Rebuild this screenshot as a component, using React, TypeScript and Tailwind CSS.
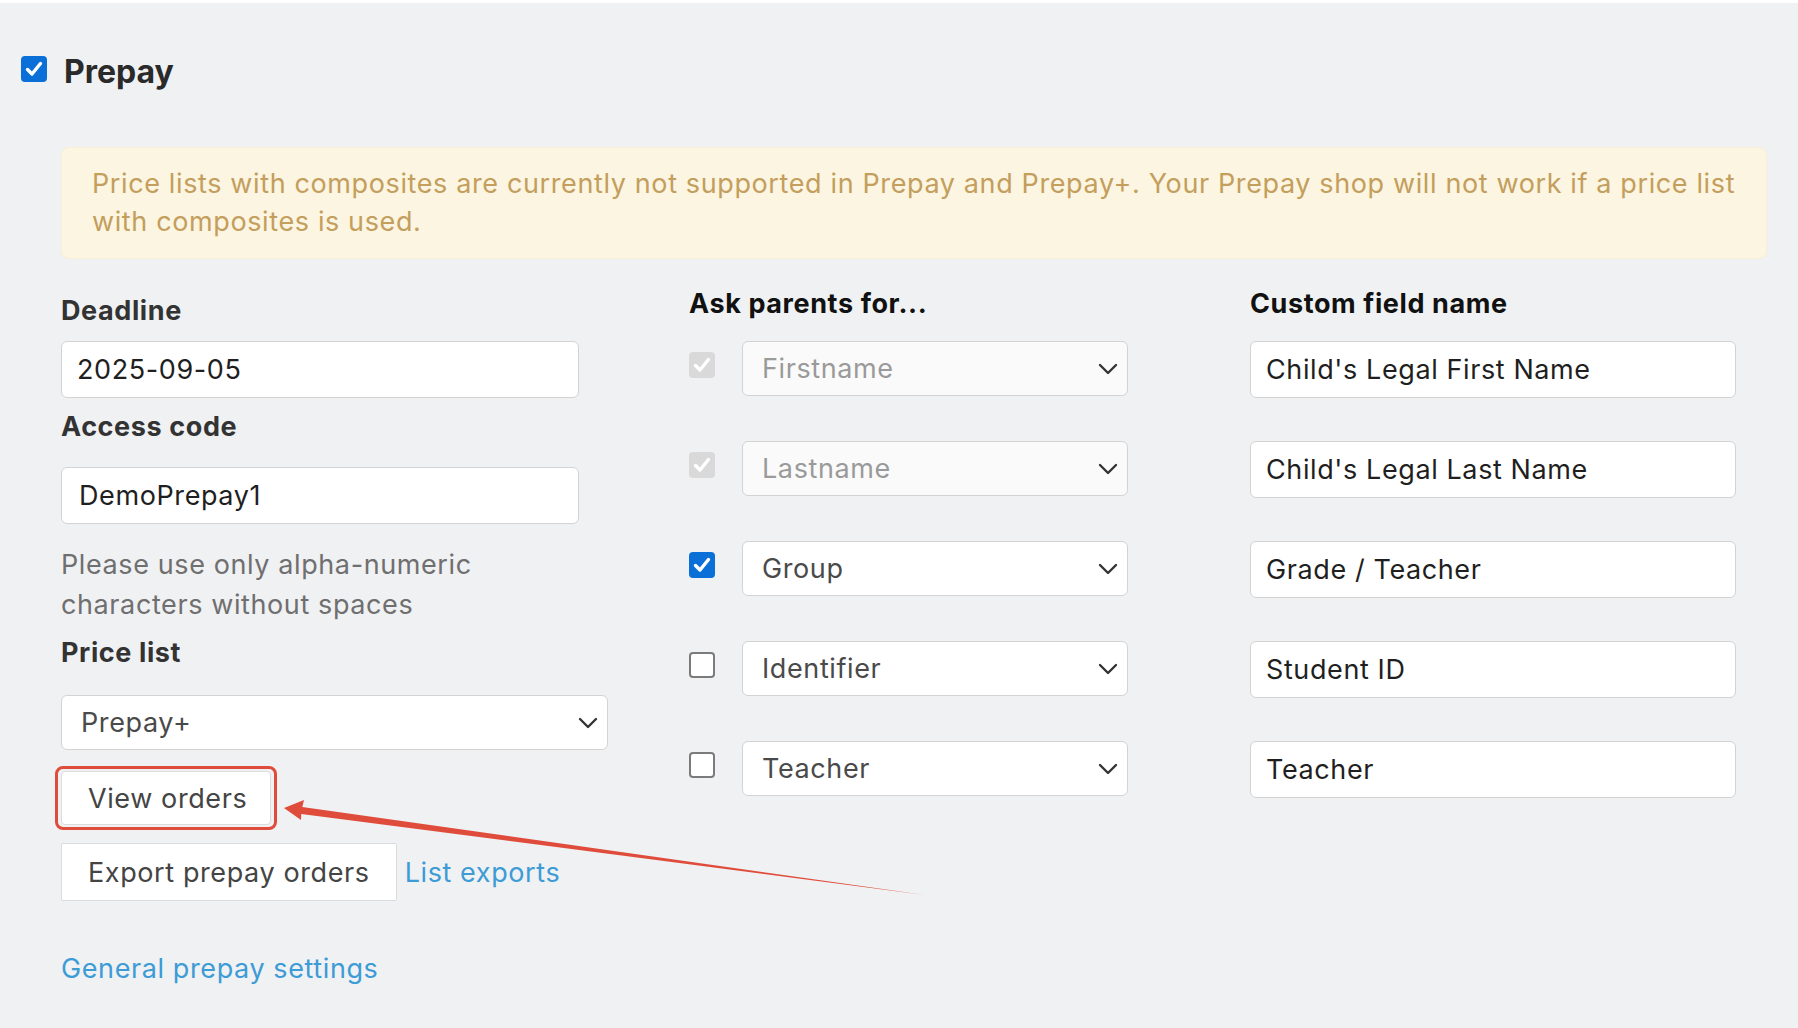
import React from "react";

type CbState = "checked" | "unchecked" | "disabled";

function Check() {
  return (
    <svg viewBox="0 0 26 26" className="w-full h-full">
      <path d="M6.5 13.5 L11 18 L19.5 7.5" fill="none" stroke="white" strokeWidth="3.4" strokeLinecap="round" strokeLinejoin="round" />
    </svg>
  );
}

function Checkbox({ state }: { state: CbState }) {
  if (state === "checked")
    return (
      <div className="w-[26px] h-[26px] rounded-[4px] bg-[#0b6fd8] shrink-0">
        <Check />
      </div>
    );
  if (state === "disabled")
    return (
      <div className="w-[26px] h-[26px] rounded-[4px] bg-[#d9d9d9] shrink-0">
        <Check />
      </div>
    );
  return <div className="w-[26px] h-[26px] rounded-[4px] border-2 border-[#7b7b7b] bg-white shrink-0" />;
}

function Chevron() {
  return (
    <svg viewBox="0 0 20 12" className="w-[20px] h-[12px] shrink-0">
      <path d="M2 2 L10 10 L18 2" fill="none" stroke="#333" strokeWidth="2.4" strokeLinecap="round" strokeLinejoin="round" />
    </svg>
  );
}

function TextInput({ value, className = "" }: { value: string; className?: string }) {
  return (
    <div className={`h-[57px] bg-white border border-[#d3d3d3] rounded-[6px] flex items-center px-[15px] text-[#1f1f1f] ${className}`}>
      {value}
    </div>
  );
}

function Select({ value, disabled = false, className = "" }: { value: string; disabled?: boolean; className?: string }) {
  return (
    <div
      className={`h-[55px] border border-[#d3d3d3] rounded-[6px] flex items-center justify-between pl-[19px] pr-[9px] ${
        disabled ? "bg-[#fafafa] text-[#9a9a9a]" : "bg-white text-[#4a4a4a]"
      } ${className}`}
    >
      <span>{value}</span>
      <Chevron />
    </div>
  );
}

const rows: { cb: CbState; sel: string; custom: string }[] = [
  { cb: "disabled", sel: "Firstname", custom: "Child's Legal First Name" },
  { cb: "disabled", sel: "Lastname", custom: "Child's Legal Last Name" },
  { cb: "checked", sel: "Group", custom: "Grade / Teacher" },
  { cb: "unchecked", sel: "Identifier", custom: "Student ID" },
  { cb: "unchecked", sel: "Teacher", custom: "Teacher" },
];

export default function App() {
  return (
    <div className="relative w-[1798px] h-[1028px] overflow-hidden bg-[#f0f1f3] font-['Inter','Liberation_Sans',sans-serif] text-[27px] tracking-[0.6px] leading-[39px]">
      <div className="h-[3px] bg-white" />

      {/* Heading */}
      <div className="mt-[47px] h-[44px] pl-[21px] flex items-center gap-[17px]">
        <div className="self-start mt-[6px]">
          <Checkbox state="checked" />
        </div>
        <span className="text-[32px] tracking-normal font-bold text-[#2a2a2a] leading-[44px]">Prepay</span>
      </div>

      {/* Warning */}
      <div className="ml-[61px] mt-[53px] w-[1706px] rounded-[8px] bg-[#fcf5e1] border border-[#faeed4] px-[30px] py-[17px] text-[#c39e5d] leading-[38px] tracking-[0.62px]">
        Price lists with composites are currently not supported in Prepay and Prepay+. Your Prepay shop will not work if a price list with composites is used.
      </div>

      {/* Columns */}
      <div className="ml-[61px] mt-[25px] flex">
        {/* Column 1 */}
        <div className="w-[628px] pt-[7px] flex flex-col">
          <div className="font-bold text-[#333]">Deadline</div>
          <TextInput value="2025-09-05" className="mt-[11px] w-[518px]" />
          <div className="mt-[9px] font-bold text-[#333]">Access code</div>
          <TextInput value="DemoPrepay1" className="mt-[21px] w-[518px] pl-[17px]" />
          <div className="mt-[21px] text-[#6f6f6f] leading-[40px]">
            Please use only alpha-numeric
            <br />
            characters without spaces
          </div>
          <div className="mt-[8px] font-bold text-[#333]">Price list</div>
          <Select value="Prepay+" className="mt-[23px] w-[547px]" />
          <div className="mt-[21px] relative self-start">
            <div className="h-[54px] pl-[26px] pr-[23px] bg-white border border-[#dcdcdc] rounded-[4px] flex items-center text-[#444]">View orders</div>
            <div className="absolute -inset-x-[6px] -inset-y-[5px] border-[3px] border-[#e04c3b] rounded-[8px]" />
          </div>
          <div className="mt-[18px] flex items-center gap-[8px]">
            <div className="h-[58px] px-[26px] bg-white border border-[#dcdcdc] rounded-[2px] flex items-center text-[#444]">Export prepay orders</div>
            <span className="text-[#3d9bd6]">List exports</span>
          </div>
          <div className="mt-[48px] text-[#3d9bd6]">General prepay settings</div>
        </div>

        {/* Column 2 */}
        <div className="w-[561px] flex flex-col">
          <div className="font-bold text-[#111]">Ask parents for...</div>
          <div className="mt-[18px] flex flex-col gap-[45px]">
            {rows.map((r) => (
              <div key={r.sel} className="flex items-start">
                <div className="mt-[11px] w-[53px]">
                  <Checkbox state={r.cb} />
                </div>
                <Select value={r.sel} disabled={r.cb === "disabled"} className="w-[386px]" />
              </div>
            ))}
          </div>
        </div>

        {/* Column 3 */}
        <div className="flex flex-col">
          <div className="font-bold text-[#111]">Custom field name</div>
          <div className="mt-[18px] flex flex-col gap-[43px]">
            {rows.map((r) => (
              <TextInput key={r.custom} value={r.custom} className="w-[486px]" />
            ))}
          </div>
        </div>
      </div>

      {/* Annotation arrow */}
      <svg className="absolute left-0 top-0 pointer-events-none" width="1798" height="1028" viewBox="0 0 1798 1028">
        <polygon
          points="284,808 304,800 302.3,806.9 925,895 301.3,813.9 301,820"
          fill="#e04c3b"
        />
      </svg>
    </div>
  );
}
